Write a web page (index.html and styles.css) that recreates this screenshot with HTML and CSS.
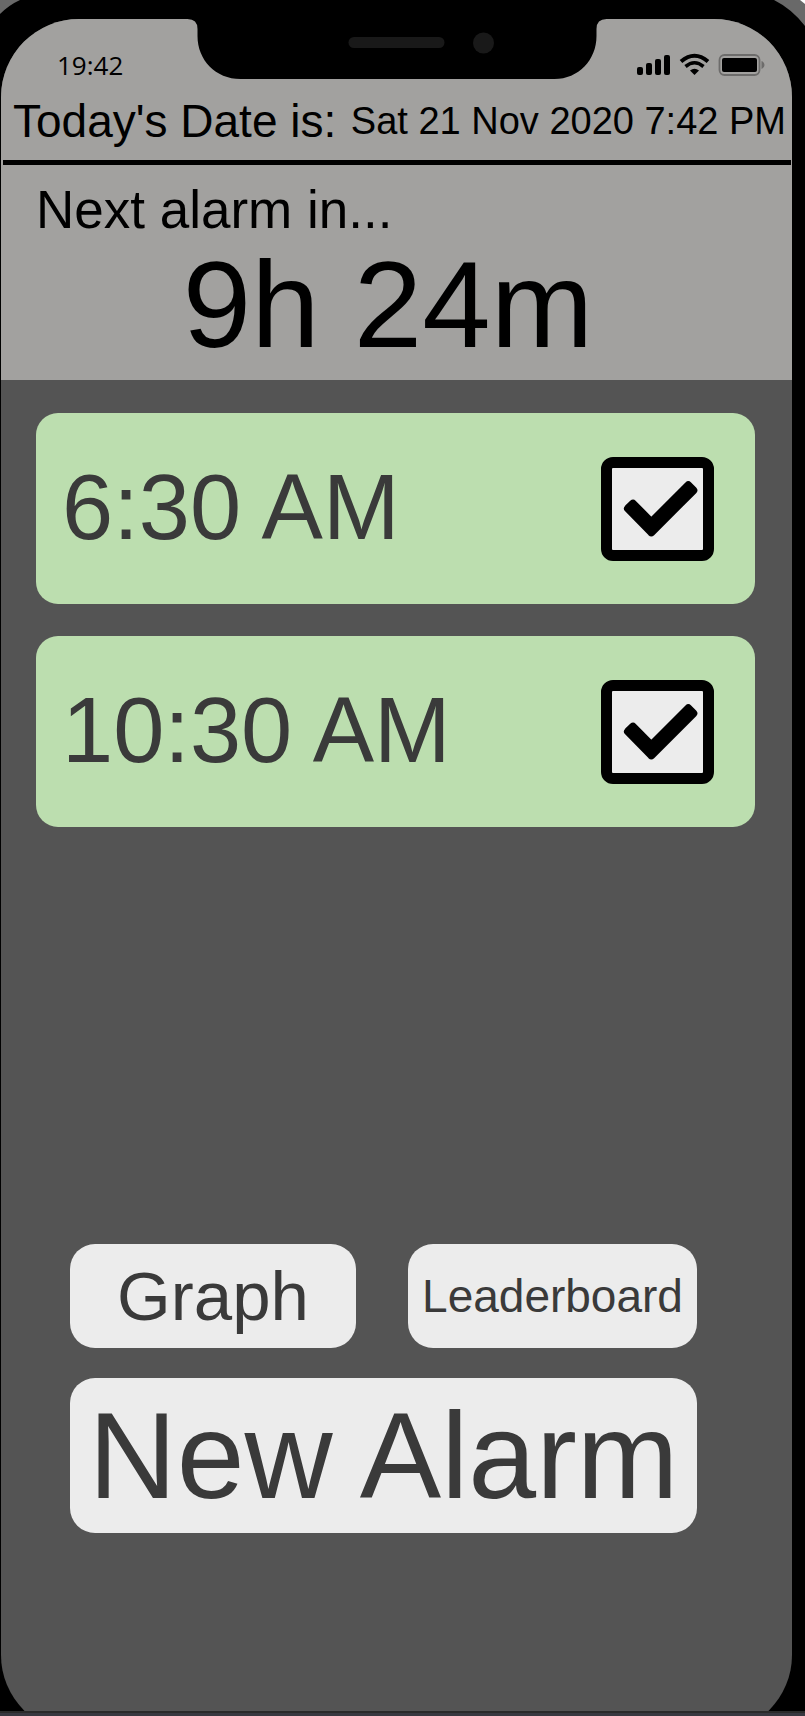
FILE: index.html
```html
<!DOCTYPE html>
<html lang="en">
<head>
<meta charset="utf-8">
<meta name="viewport" content="width=device-width, initial-scale=1">
<title>Alarms</title>
<link rel="stylesheet" href="styles.css">
</head>
<body>
<div class="device">
  <svg class="corner corner-left" width="20" height="15" viewBox="0 0 20 15" aria-hidden="true"><path d="M0 0H20Q9 5 0 14Z" fill="#696969"/></svg>
  <svg class="corner corner-right" width="31" height="27" viewBox="0 0 31 27" aria-hidden="true"><path d="M0 0H31V26Q18 9 0 0Z" fill="#696969"/><path d="M26 0H31V4Z" fill="#fff"/></svg>
  <div class="screen">
    <header class="top">
      <svg class="notch" width="419" height="60" viewBox="0 0 419 60" aria-hidden="true">
        <path d="M0 0Q10 0 10 10V17C10 41 28 60 53 60H367C391 60 409 41 409 17V10Q409 0 419 0Z" fill="#000"/>
        <rect x="161" y="18" width="96" height="11" rx="5.500" fill="#191919"/>
        <circle cx="296" cy="24" r="10.500" fill="#191919"/>
      </svg>
      <div class="status">
        <time class="clock">19:42</time>
        <svg width="130" height="26" viewBox="636 52 130 26" role="img" aria-label="Signal, Wi-Fi and battery">
          <rect x="637" y="67" width="6" height="8" rx="2"/>
          <rect x="646" y="63" width="6" height="12" rx="2"/>
          <rect x="655" y="59" width="6" height="16" rx="2"/>
          <rect x="664" y="55" width="6" height="20" rx="2"/>
          <path d="M681 61.500Q694.500 50 708 61.500" fill="none" stroke="#000" stroke-width="4"/>
          <path d="M685.500 66.500Q694.500 59 703.500 66.500" fill="none" stroke="#000" stroke-width="3.600"/>
          <path d="M690 70.500Q694.500 67 699 70.500L694.500 75Z"/>
          <rect x="719.500" y="55" width="40" height="20" rx="5" fill="none" stroke="#6d6c6b" stroke-width="1.800"/>
          <rect x="722" y="58" width="35" height="14" rx="2"/>
          <path d="M761.500 61Q764.500 62 764.500 65T761.500 69Z" fill="#6d6c6b"/>
        </svg>
      </div>
      <div class="today"><span class="today-label">Today's Date is:</span><time class="today-date">Sat 21 Nov 2020 7:42 PM</time></div>
      <section class="next">
        <h1 class="next-label">Next alarm in...</h1>
        <p class="countdown">9h 24m</p>
      </section>
    </header>
    <main class="content">
      <ul class="alarms">
        <li class="alarm">
          <label class="time" for="alarm-1">6:30 AM</label>
          <span class="check">
            <input class="box" type="checkbox" id="alarm-1" checked>
            <svg class="tick" viewBox="0 0 113 104" aria-hidden="true"><path d="M27 51.500L32 46.700L50.300 65.300L87.300 28.300L92.300 33.300L50.300 75.300Z"/></svg>
          </span>
        </li>
        <li class="alarm">
          <label class="time" for="alarm-2">10:30 AM</label>
          <span class="check">
            <input class="box" type="checkbox" id="alarm-2" checked>
            <svg class="tick" viewBox="0 0 113 104" aria-hidden="true"><path d="M27 51.500L32 46.700L50.300 65.300L87.300 28.300L92.300 33.300L50.300 75.300Z"/></svg>
          </span>
        </li>
      </ul>
      <div class="actions">
        <button class="button graph" type="button">Graph</button>
        <button class="button leaderboard" type="button">Leaderboard</button>
        <button class="button new-alarm" type="button">New Alarm</button>
      </div>
    </main>
  </div>
</div>
<div class="edge"></div>
</body>
</html>
```

FILE: styles.css
```css
* {
  box-sizing: border-box;
}

body {
  margin: 0;
  min-height: 100vh;
  display: flex;
  flex-direction: column;
  background: #000;
  color: #000;
  font-family: "Liberation Sans", Arial, sans-serif;
}

.device {
  position: relative;
  flex: 1;
  display: flex;
  flex-direction: column;
  padding: 19px 13px 0 1px;
  overflow: hidden;
}

.edge {
  height: 5px;
  border-top: 2px solid #2a2a2a;
  background: #383840;
}

.corner {
  position: absolute;
  top: 0;
}

.corner-left {
  left: 0;
}

.corner-right {
  right: 0;
}

.screen {
  flex: 1;
  display: flex;
  flex-direction: column;
  margin-bottom: -22px;
  border-radius: 78px;
  overflow: hidden;
  background: #545454;
}

.top {
  position: relative;
  background: #a2a19f;
}

.notch {
  position: absolute;
  top: 0;
  left: 50%;
  transform: translateX(-50%);
}

.status {
  height: 68px;
  display: flex;
  align-items: center;
  justify-content: space-between;
  padding: 24px 26px 0 56px;
}

.clock {
  font-family: "Open Sans", sans-serif;
  font-size: 26px;
  line-height: 36px;
}

.today {
  display: flex;
  align-items: center;
  justify-content: space-between;
  height: 78px;
  margin: 0 1px 0 2px;
  padding: 0 5px 5px 10px;
  border-bottom: 5px solid #000;
  white-space: nowrap;
}

.today-label {
  font-size: 46px;
  line-height: 52px;
}

.today-date {
  font-size: 38px;
  line-height: 44px;
}

.next {
  padding: 15px 24px 10px 35px;
}

.next-label {
  margin: 0;
  font-size: 53px;
  font-weight: 400;
  line-height: 60px;
}

.countdown {
  margin: 0;
  padding-right: 28px;
  font-size: 123px;
  line-height: 130px;
  text-align: center;
}

.content {
  flex: 1;
  display: flex;
  flex-direction: column;
  padding: 33px 37px 200px 35px;
}

.alarms {
  display: grid;
  gap: 32px;
  margin: 0;
  padding: 0;
  list-style: none;
}

.alarm {
  display: flex;
  align-items: center;
  justify-content: space-between;
  height: 191px;
  padding: 0 41px 0 26px;
  border-radius: 22px;
  background: #bcdeaf;
}

.time {
  padding-bottom: 4px;
  color: #3a3a3a;
  font-size: 92px;
  line-height: 104px;
}

.check {
  display: grid;
  width: 113px;
  height: 104px;
}

.box,
.tick {
  grid-area: 1 / 1;
}

.box {
  appearance: none;
  width: 100%;
  height: 100%;
  margin: 0;
  border: 11px solid #000;
  border-radius: 12px;
  background: #ececec;
}

.tick {
  pointer-events: none;
  fill: #000;
  stroke: #000;
  stroke-width: 8px;
  stroke-linejoin: round;
  visibility: hidden;
}

.box:checked + .tick {
  visibility: visible;
}

.actions {
  display: grid;
  grid-template-columns: 286fr 289fr;
  grid-template-rows: 104px 155px;
  gap: 30px 52px;
  margin: auto 58px 0 34px;
}

.button {
  padding: 0;
  border: 0;
  border-radius: 25px;
  background: #ececec;
  color: #3a3a3a;
  font-family: inherit;
}

.graph {
  font-size: 69px;
}

.leaderboard {
  font-size: 46px;
}

.new-alarm {
  grid-column: 1 / -1;
  font-size: 122px;
}
```
